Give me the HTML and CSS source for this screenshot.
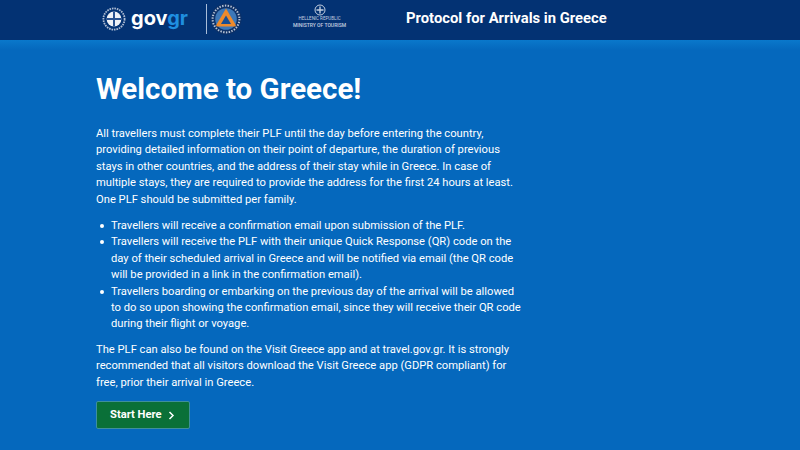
FILE: index.html
```html
<!DOCTYPE html>
<html lang="en">
<head>
    <meta charset="utf-8">
    <title>Protocol for Arrivals in Greece</title>
    <link rel="stylesheet" href="styles.css">
</head>
<body>
    <header class="topbar">
        <div class="logos">
            <svg class="emblem" width="24" height="24" viewBox="0 0 24 24">
                <circle cx="12" cy="12" r="10.6" fill="none" stroke="#aebcd3" stroke-width="1.8" stroke-dasharray="1.6 .9"/>
                <circle cx="12" cy="12" r="7.4" fill="#eef1f6"/>
                <path d="M12 4.6v14.8M4.6 12h14.8" stroke="#2a5391" stroke-width="2"/>
            </svg>
            <span class="gov">gov<span class="gr">gr</span></span>
            <span class="divider"></span>
            <svg class="civil" width="32" height="32" viewBox="0 0 32 32">
                <circle cx="16" cy="16" r="15.6" fill="#0d3168"/>
                <circle cx="16" cy="16" r="13.4" fill="none" stroke="#b9c4d6" stroke-width="2" stroke-dasharray="1.4 1.4"/>
                <circle cx="16" cy="16" r="10.8" fill="#3d78b8"/>
                <path d="M16 5.4L25.8 22Q26.2 23.6 24.6 23.6H7.4Q5.8 23.6 6.2 22Z" fill="#ee8a2b"/>
                <path d="M16 12.5L21 21H11Z" fill="#174f94"/>
            </svg>
            <div class="ministry">
                <svg width="12" height="12" viewBox="0 0 12 12">
                    <circle cx="6" cy="6" r="5" fill="none" stroke="#c4cfe0" stroke-width="1"/>
                    <path d="M6 2.5v7M2.5 6h7" stroke="#c4cfe0" stroke-width="1.4"/>
                </svg>
                <span class="ministry-top">HELLENIC REPUBLIC</span>
                <span class="ministry-name">MINISTRY OF TOURISM</span>
            </div>
        </div>
        <div class="site-title">Protocol for Arrivals in Greece</div>
    </header>

    <main class="content">
        <h1>Welcome to Greece!</h1>
        <p>All travellers must complete their PLF until the day before entering the country, providing detailed information on their point of departure, the duration of previous stays in other countries, and the address of their stay while in Greece. In case of multiple stays, they are required to provide the address for the first 24 hours at least. One PLF should be submitted per family.</p>
        <ul>
            <li>Travellers will receive a confirmation email upon submission of the PLF.</li>
            <li>Travellers will receive the PLF with their unique Quick Response (QR) code on the day of their scheduled arrival in Greece and will be notified via email (the QR code will be provided in a link in the confirmation email).</li>
            <li>Travellers boarding or embarking on the previous day of the arrival will be allowed to do so upon showing the confirmation email, since they will receive their QR code during their flight or voyage.</li>
        </ul>
        <p>The PLF can also be found on the Visit Greece app and at travel.gov.gr. It is strongly recommended that all visitors download the Visit Greece app (GDPR compliant) for free, prior their arrival in Greece.</p>
        <a class="start-btn" href="#">Start Here
            <svg width="7" height="9" viewBox="0 0 7 9"><path d="M1.5 1l3.5 3.5L1.5 8" fill="none" stroke="#fff" stroke-width="1.5"/></svg>
        </a>
    </main>
</body>
</html>
```

FILE: styles.css
```css
* {
    margin: 0;
    padding: 0;
    box-sizing: border-box;
}
html, body {
    height: 100%;
    overflow: hidden;
}
body {
    font-family: Roboto, "Liberation Sans", sans-serif;
    background: linear-gradient(#0a78cb 40px, #0568bd 50px);
    color: #fff;
}
.topbar {
    display: flex;
    align-items: center;
    height: 40px;
    padding: 0 0 2px 102px;
    background: #033273;
}
.logos {
    display: flex;
    align-items: center;
    width: 304px;
}
.gov {
    margin: 0 0 3px 5px;
    font-family: Inter, sans-serif;
    font-size: 20px;
    font-weight: 700;
}
.gr {
    color: #1f8fe0;
}
.divider {
    width: 1px;
    height: 30px;
    margin: 0 3px 0 18px;
    background: #a9bdd9;
}
.ministry {
    display: flex;
    flex-direction: column;
    align-items: center;
    align-self: flex-start;
    margin-left: 51px;
    padding-top: 1px;
    color: #c4cfe0;
}
.ministry-top {
    font-size: 4.5px;
    line-height: 6px;
}
.ministry-name {
    font-size: 5px;
    font-weight: 500;
    line-height: 7px;
}
.site-title {
    margin-bottom: 2px;
    font-size: 14.8px;
    font-weight: 700;
}
.content {
    width: 428px;
    margin-left: 96px;
    padding-top: 31px;
    font-size: 11.2px;
    line-height: 16.4px;
}
h1 {
    margin-bottom: 19px;
    font-size: 29.5px;
    line-height: 36px;
    font-weight: 700;
}
p {
    margin-bottom: 10px;
}
ul {
    margin-bottom: 9px;
    padding-left: 15px;
    list-style: none;
}
li {
    display: flex;
}
li::before {
    content: "";
    flex: none;
    width: 4px;
    height: 4px;
    margin: 6px 7px 0 -11px;
    border-radius: 50%;
    background: #fff;
}
.start-btn {
    display: inline-flex;
    align-items: center;
    gap: 6px;
    height: 28px;
    width: 94px;
    padding-left: 13px;
    background: #0a7038;
    border: 1px solid #3f8f9c;
    border-radius: 2px;
    color: #fff;
    font-weight: 700;
    text-decoration: none;
}
```
